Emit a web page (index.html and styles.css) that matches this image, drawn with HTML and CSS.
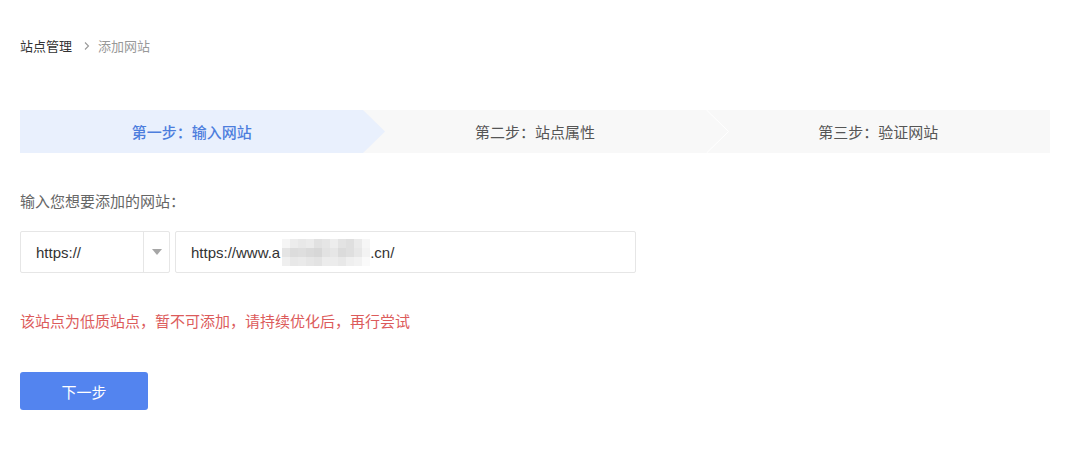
FILE: index.html
```html
<!DOCTYPE html>
<html lang="zh-CN">
<head>
<meta charset="utf-8">
<title>添加网站</title>
<link rel="stylesheet" href="styles.css">
</head>
<body>
<div class="page">
  <div class="breadcrumb">
    <span class="crumb">站点管理</span>
    <svg class="crumb-sep" width="8" height="10" viewBox="0 0 8 10"><path d="M2 1.5 L5.5 5 L2 8.5" fill="none" stroke="#999" stroke-width="1.1"/></svg>
    <span class="crumb current">添加网站</span>
  </div>

  <div class="steps">
    <div class="step active">
      第一步：输入网站
      <svg class="step-arrow" width="22" height="43" viewBox="0 0 22 43" preserveAspectRatio="none"><polygon points="0,0 22,21.5 0,43" fill="#e9f0fd"/></svg>
    </div>
    <div class="step">
      第二步：站点属性
      <svg class="step-chevron" width="24" height="43" viewBox="0 0 24 43" preserveAspectRatio="none"><polyline points="0.5,0 22.5,21.5 0.5,43" fill="none" stroke="#ffffff" stroke-width="1"/></svg>
    </div>
    <div class="step">第三步：验证网站</div>
  </div>

  <div class="label">输入您想要添加的网站：</div>

  <div class="url-row">
    <div class="select">
      <span class="select-value">https://</span>
      <span class="select-btn"><svg width="10" height="6" viewBox="0 0 10 6"><polygon points="0,0 10,0 5,6" fill="#a6a6a6"/></svg></span>
    </div>
    <div class="input">https://www.a<span class="mosaic"><i class="m1"></i><i class="m2"></i><i class="m3"></i><i class="m4"></i><i class="m5"></i><i class="m6"></i><i class="m7"></i><i class="m8"></i><i class="m9"></i><i class="m10"></i><i class="m11"></i><i class="m12"></i><i class="m13"></i><i class="m14"></i><i class="m15"></i><i class="m16"></i><i class="m17"></i><i class="m18"></i><i class="m19"></i><i class="m20"></i><i class="m21"></i><i class="m22"></i><i class="m23"></i><i class="m24"></i><i class="m25"></i><i class="m26"></i><i class="m27"></i><i class="m28"></i><i class="m29"></i><i class="m30"></i><i class="m31"></i><i class="m32"></i><i class="m33"></i></span>.cn/</div>
  </div>

  <div class="error">该站点为低质站点，暂不可添加，请持续优化后，再行尝试</div>

  <button class="btn-next">下一步</button>
</div>
</body>
</html>
```

FILE: styles.css
```css
* { box-sizing: border-box; }
html, body { margin: 0; padding: 0; background: #fff; }
body {
  font-family: "Noto Sans CJK SC", "Liberation Sans", sans-serif;
  color: #333;
  text-spacing-trim: space-all;
}
.page {
  padding: 36px 22px 0 20px;
  width: 1072px;
}
.breadcrumb {
  display: flex;
  align-items: center;
  height: 20px;
  font-size: 13px;
  line-height: 20px;
}
.crumb { color: #333; }
.crumb.current { color: #999; }
.crumb-sep { margin: 0 7px 0 11px; }

.steps {
  margin-top: 54px;
  display: flex;
  height: 43px;
  background: #f8f8f8;
  width: 1030px;
}
.step {
  position: relative;
  flex: 1 1 0;
  display: flex;
  align-items: center;
  justify-content: center;
  font-size: 15px;
  color: #555;
}
.step.active {
  background: #e9f0fd;
  color: #4d7edd;
  font-weight: 500;
}
.step-arrow {
  position: absolute;
  top: 0;
  left: 100%;
  z-index: 1;
}
.step-chevron {
  position: absolute;
  top: 0;
  left: 100%;
  margin-left: -1px;
}

.label {
  margin-top: 38px;
  font-size: 15px;
  line-height: 20px;
  color: #666;
}

.url-row {
  margin-top: 20px;
  display: flex;
  gap: 5px;
  height: 42px;
}
.select {
  width: 150px;
  display: flex;
  border: 1px solid #e6e6e6;
  border-radius: 2px;
  font-family: "Liberation Sans", sans-serif;
  font-size: 15px;
  color: #333;
}
.select-value {
  flex: 1;
  display: flex;
  align-items: center;
  padding-left: 15px;
}
.select-btn {
  width: 26px;
  border-left: 1px solid #e6e6e6;
  display: flex;
  align-items: center;
  justify-content: center;
}
.input {
  width: 461px;
  display: flex;
  align-items: center;
  padding-left: 15px;
  border: 1px solid #e6e6e6;
  border-radius: 2px;
  font-family: "Liberation Sans", sans-serif;
  font-size: 15px;
  color: #333;
}
.mosaic {
  display: grid;
  grid-template-columns: repeat(11, 8px);
  grid-template-rows: repeat(3, 9px);
  width: 88px;
  height: 27px;
  margin: 0 0 0 2px;
  opacity: 0.9;
}
.mosaic i { display: block; background: #ececec; }
.mosaic .m1 { background: #f4f4f4; }
.mosaic .m2 { background: #ebebeb; }
.mosaic .m3 { background: #e6e6e6; }
.mosaic .m4 { background: #e9e9e9; }
.mosaic .m5 { background: #dedede; }
.mosaic .m6 { background: #e3e3e3; }
.mosaic .m7 { background: #ececec; }
.mosaic .m8 { background: #e0e0e0; }
.mosaic .m9 { background: #dcdcdc; }
.mosaic .m10 { background: #e8e8e8; }
.mosaic .m11 { background: #f6f6f6; }
.mosaic .m12 { background: #e2e2e2; }
.mosaic .m13 { background: #d9d9d9; }
.mosaic .m14 { background: #dbdbdb; }
.mosaic .m15 { background: #d6d6d6; }
.mosaic .m16 { background: #d3d3d3; }
.mosaic .m17 { background: #dfdfdf; }
.mosaic .m18 { background: #e4e4e4; }
.mosaic .m19 { background: #d8d8d8; }
.mosaic .m20 { background: #dcdcdc; }
.mosaic .m21 { background: #e5e5e5; }
.mosaic .m22 { background: #f2f2f2; }
.mosaic .m23 { background: #eeeeee; }
.mosaic .m24 { background: #e6e6e6; }
.mosaic .m25 { background: #e8e8e8; }
.mosaic .m26 { background: #e4e4e4; }
.mosaic .m27 { background: #e1e1e1; }
.mosaic .m28 { background: #ebebeb; }
.mosaic .m29 { background: #eaeaea; }
.mosaic .m30 { background: #e6e6e6; }
.mosaic .m31 { background: #eeeeee; }
.mosaic .m32 { background: #f1f1f1; }
.mosaic .m33 { background: #fafafa; }

.error {
  margin-top: 38px;
  font-size: 15px;
  line-height: 20px;
  color: #dc5b5b;
}

.btn-next {
  display: block;
  margin-top: 41px;
  width: 128px;
  height: 38px;
  border: 0;
  border-radius: 3px;
  background: #5384ef;
  color: #fff;
  font-family: "Noto Sans CJK SC", "Liberation Sans", sans-serif;
  font-size: 15px;
  padding: 0;
}
```
